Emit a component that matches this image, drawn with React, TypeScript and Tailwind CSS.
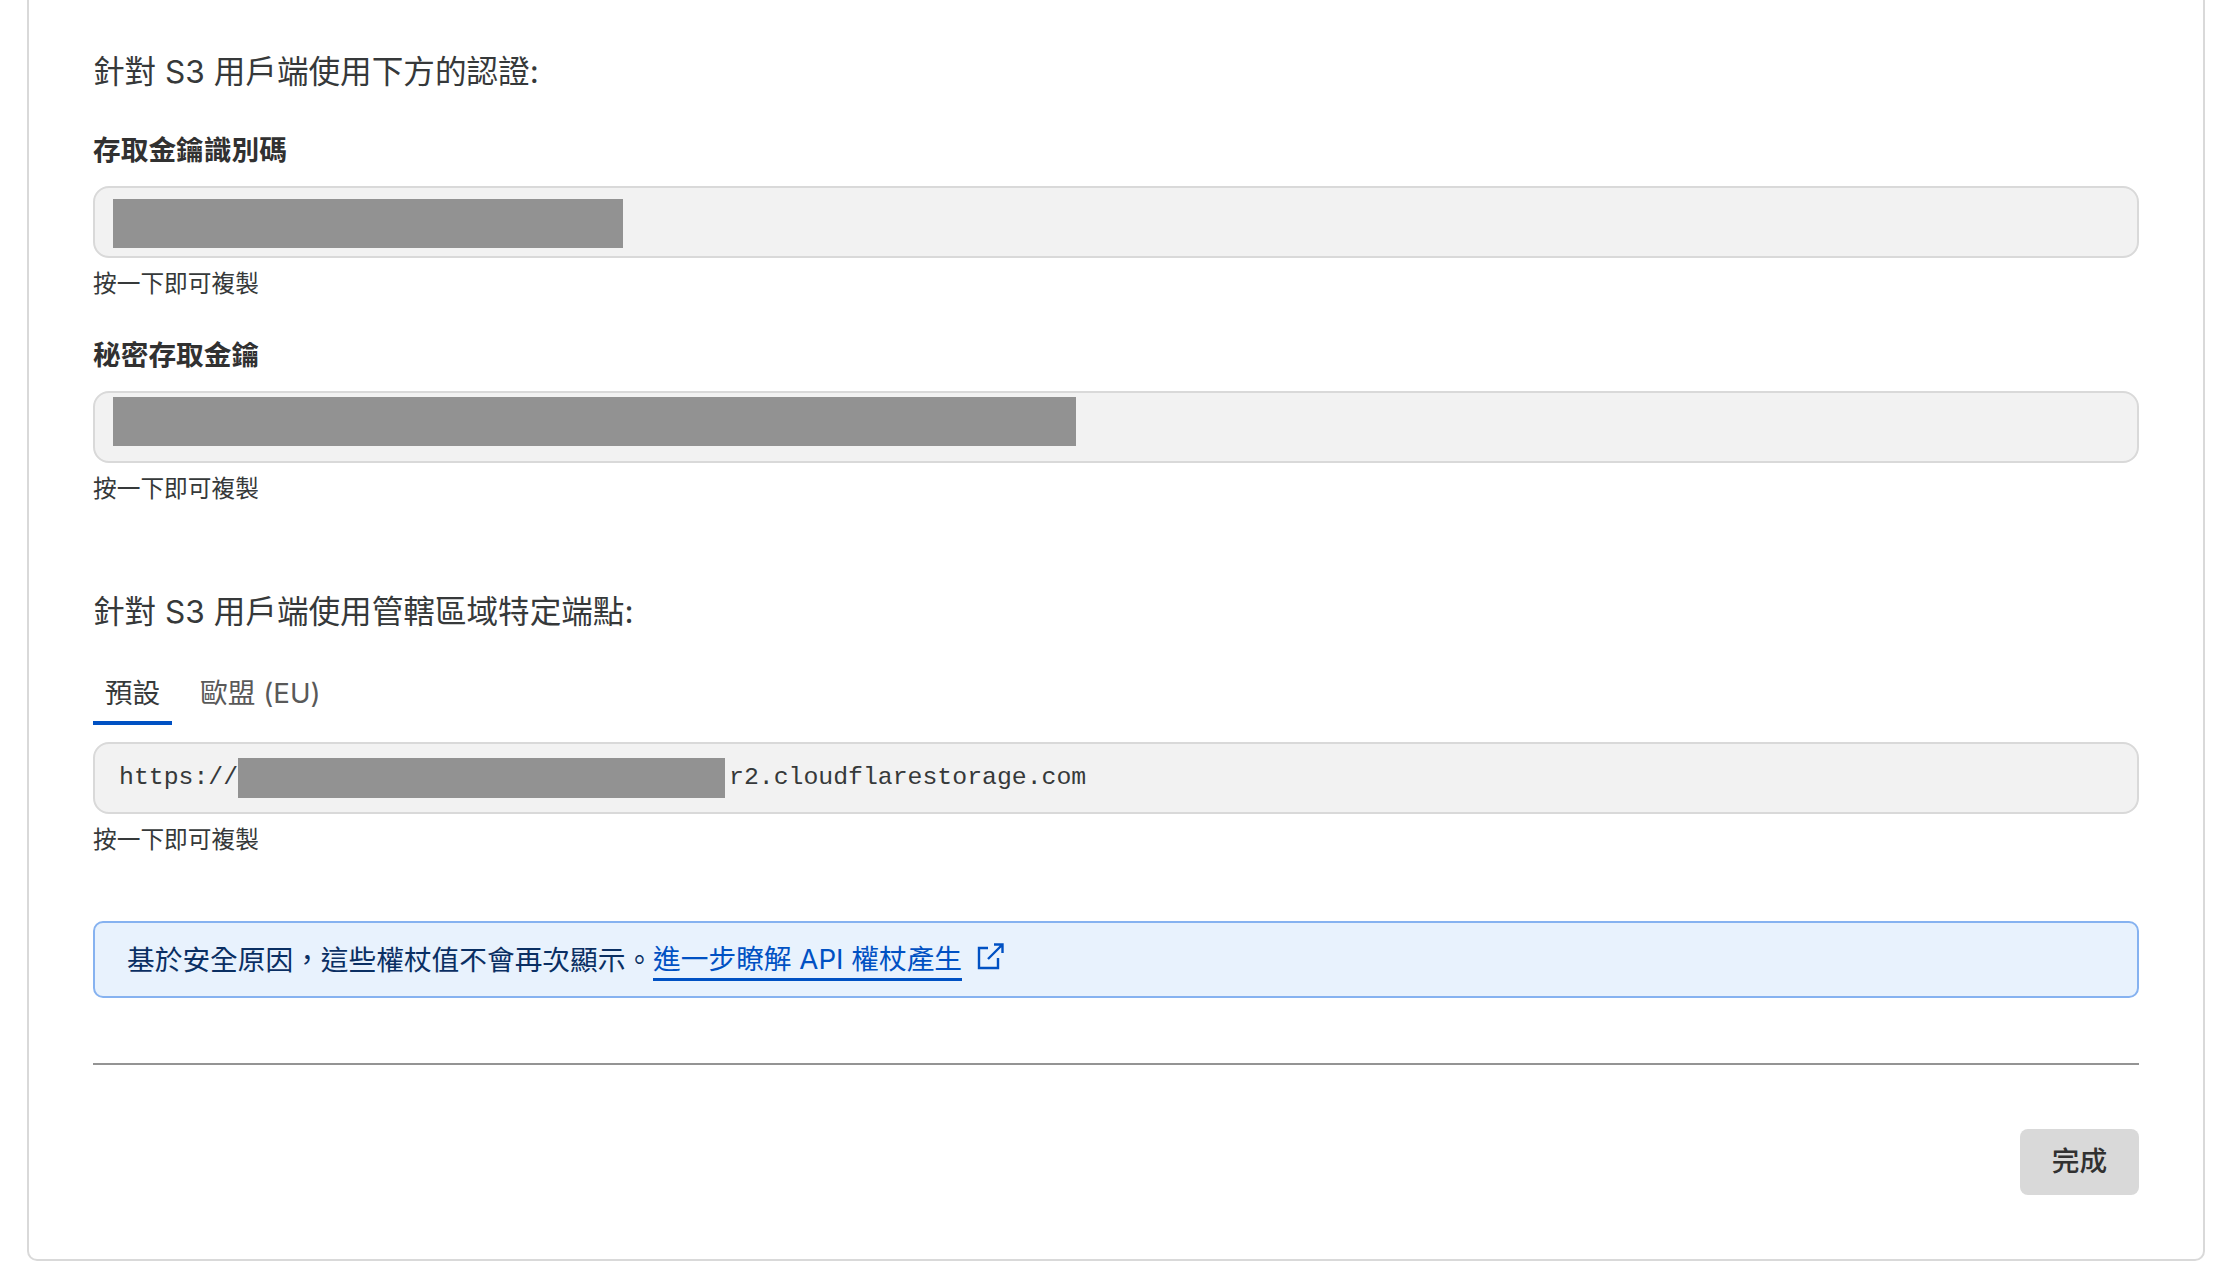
import React from "react";

const font = { fontFamily: '"Inter","Noto Sans CJK TC",sans-serif' };

function Redact({ className }: { className: string }) {
  return <span className={`block bg-[#929292] ${className}`} />;
}

function Helper() {
  return <p className="mt-[11px] h-[29px] text-[23.7px] leading-[29px] text-[#36393a]">按一下即可複製</p>;
}

function Field({ label, children, labelTop }: { label: string; children: React.ReactNode; labelTop: string }) {
  return (
    <div>
      <h3 className={`h-[34px] text-[27.7px] leading-[34px] font-semibold text-[#313131] ${labelTop}`}>{label}</h3>
      {children}
      <Helper />
    </div>
  );
}

function Box({ children, className }: { children: React.ReactNode; className: string }) {
  return (
    <div className={`flex h-[72px] items-center rounded-[16px] border-2 border-[#d9d9d9] bg-[#f2f2f2] ${className}`}>
      {children}
    </div>
  );
}

export default function App() {
  return (
    <div className="h-[1277px] overflow-hidden bg-white" style={font}>
      <div className="ml-[27px] mr-[29px] flex h-[1261px] flex-col rounded-b-[10px] border-x-2 border-b-2 border-[#d9d9d9] px-[64px] pt-[53px]">
        <h2 className="h-[38px] text-[31.6px] leading-[38px] text-[#36393a]">針對 S3 用戶端使用下方的認證:</h2>

        <Field label="存取金鑰識別碼" labelTop="mt-[42px]">
          <Box className="mt-[19px] pl-[18px]">
            <Redact className="mt-[2px] h-[49px] w-[510px]" />
          </Box>
        </Field>

        <Field label="秘密存取金鑰" labelTop="mt-[40px]">
          <Box className="mt-[19px] pl-[18px]">
            <Redact className="mb-[12px] h-[49px] w-[963px]" />
          </Box>
        </Field>

        <h2 className="mt-[90px] h-[38px] text-[31.6px] leading-[38px] text-[#36393a]">針對 S3 用戶端使用管轄區域特定端點:</h2>

        <div className="mt-[45px] flex h-[49px] text-[27.7px] leading-[34px]">
          <div className="h-[49px] w-[79px] border-b-[4px] border-[#0051c3] text-center text-[#36393a]">預設</div>
          <div className="ml-[28px] text-[#595959]">歐盟 (EU)</div>
        </div>

        <Box className="mt-[17px] pl-[24px] text-[24.8px] text-[#36393a]">
          <span className="flex items-center" style={{ fontFamily: '"Liberation Mono",monospace' }}>
            https://
            <Redact className="h-[40px] w-[487px]" />
            <span className="ml-[4px]">r2.cloudflarestorage.com</span>
          </span>
        </Box>
        <Helper />

        <div className="mt-[67px] flex h-[77px] items-center rounded-[10px] border-2 border-[#86b2f0] bg-[#e8f2fd] pl-[32px] pt-[2px] text-[27.7px] text-[#0a2f63]">
          <span>{"基於安全原因\uFF0C這些權杖值不會再次顯示\u3002"}</span>
          <a className="border-b-[3px] border-[#0051c3] leading-[38px] text-[#0051c3]">進一步瞭解 API 權杖產生</a>
          <svg className="mb-[8px] ml-[14px] h-[29px] w-[29px]" viewBox="0 0 29 29" fill="none" stroke="#0051c3" strokeWidth="2.4">
            <path d="M12 6H3v20h19V16" />
            <path d="M12 17 26 3M18 2.5h8.5V11" />
          </svg>
        </div>

        <div className="mt-[65px] h-[1px] border-t-2 border-[#949494]" />

        <div className="mt-[64px] flex justify-end">
          <button className="h-[66px] w-[119px] rounded-[8px] bg-[#d9d9d9] text-[27.7px] font-medium text-[#313131]">完成</button>
        </div>
      </div>
    </div>
  );
}
